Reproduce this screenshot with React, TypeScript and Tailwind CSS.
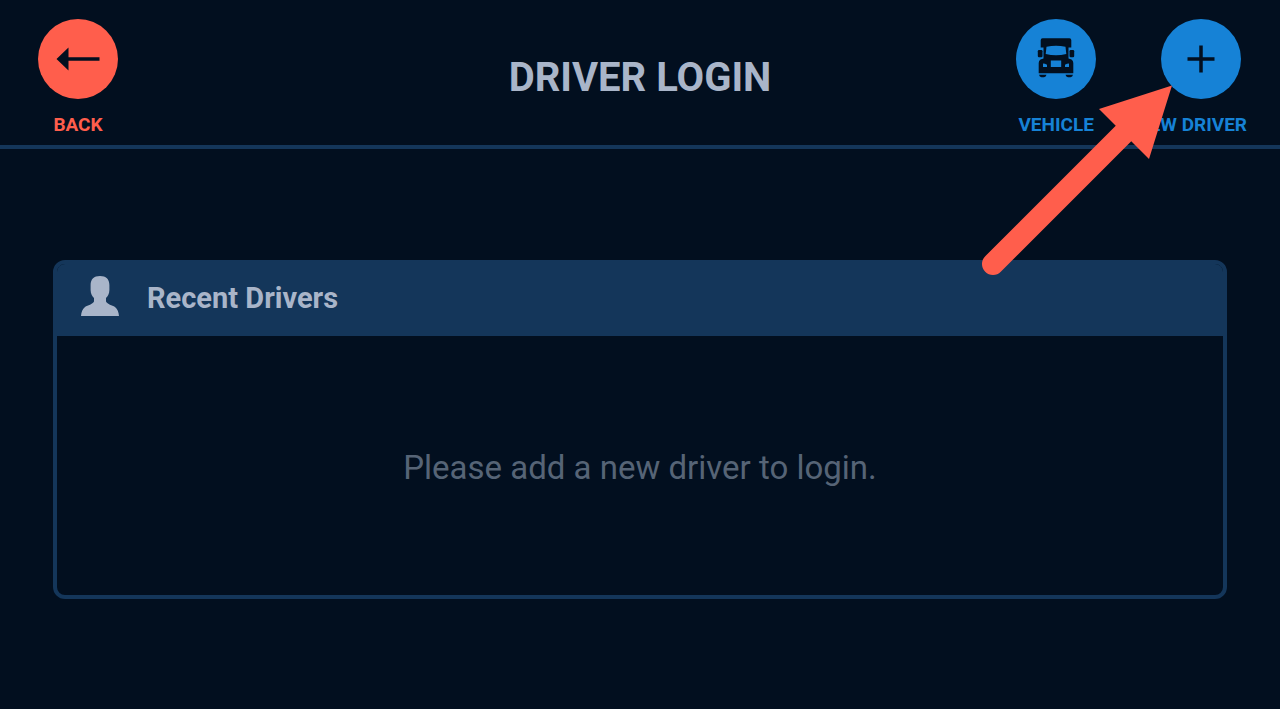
import type { ReactNode } from 'react'

interface RoundButtonProps {
  label: string
  tone: 'red' | 'blue'
  align?: 'center' | 'end'
  children: ReactNode
}

function RoundButton({ label, tone, align = 'center', children }: RoundButtonProps) {
  return (
    <button
      type="button"
      className={`flex flex-col gap-4 text-[19px] leading-5 font-bold whitespace-nowrap ${
        tone === 'red' ? 'text-[#ff5e4c]' : 'text-[#1682d6]'
      } ${align === 'end' ? 'items-end' : 'items-center'}`}
    >
      <span
        className={`flex size-20 items-center justify-center rounded-full text-[#020f1f] ${
          tone === 'red' ? 'bg-[#ff5e4c]' : 'bg-[#1682d6]'
        } ${align === 'end' ? 'mr-1.5' : ''}`}
      >
        {children}
      </span>
      <span>{label}</span>
    </button>
  )
}

function ArrowLeftIcon() {
  return (
    <svg viewBox="0 0 44 24" className="h-6 w-11" fill="currentColor" aria-hidden="true">
      <path d="M0.5 12 12.5 0.5V10.3H43.5V13.700H12.500V23.500Z" />
    </svg>
  )
}

function TruckIcon() {
  return (
    <svg viewBox="0 0 40 42" className="h-[42px] w-10" fill="currentColor" fillRule="evenodd" aria-hidden="true">
      <path d="M6.500 0.300H33.500Q35.300 0.300 35.300 2.200V9.500H32.500V20.500L35.500 21.500Q37.300 22.500 37.300 25V35.300H2.700V25Q2.700 22.500 4.500 21.500L7.500 20.500V9.500H4.700V2.200Q4.700 0.300 6.500 0.300ZM10.500 8.800Q20 6.800 29.500 8.800L30.300 16Q20 18.400 9.700 16ZM14.800 22.600V29H25.200V22.600ZM7 25.600Q9 25.600 11 26.800V29H7ZM33 25.600Q31 25.600 29 26.800V29H33Z" />
      <rect x="1.800" y="12" width="4.700" height="7.300" rx="1.200" />
      <rect x="33.500" y="12" width="4.700" height="7.300" rx="1.200" />
      <path d="M3 36.800H10.500Q10 39.200 8 39.200H5.500Q3.500 39.200 3 36.800ZM29.500 36.800H37Q36.500 39.200 34.500 39.200H32Q30 39.200 29.500 36.800Z" />
    </svg>
  )
}

function PlusIcon() {
  return (
    <svg viewBox="0 0 28 28" className="size-7" fill="none" stroke="currentColor" strokeWidth="3.5" aria-hidden="true">
      <path d="M14 0.500V27.500M0.500 14H27.500" />
    </svg>
  )
}

function PersonIcon() {
  return (
    <svg viewBox="0 0 38 40" className="h-10 w-[38px] shrink-0" fill="currentColor" aria-hidden="true">
      <path d="M19 0C25 0 28.400 3.200 28.400 9V14C28.400 18 26.500 20.500 25 22V25.500C26.500 28.500 31 29 34 31C36.500 33 37.700 36 38 40H0C0.300 36 1.500 33 4 31C7 29 11.500 28.500 13 25.500V22C11.500 20.500 9.600 18 9.600 14V9C9.600 3.200 13 0 19 0Z" />
    </svg>
  )
}

// Callout pointing at the new driver button
function PointerArrow() {
  return (
    <svg
      viewBox="0 0 193 193"
      className="pointer-events-none absolute top-[84px] right-[107px] size-[193px]"
      aria-hidden="true"
    >
      <path d="M13 180 150 43" stroke="#ff5e4c" strokeWidth="22" strokeLinecap="round" />
      <path d="M192 1.500 119 25 169 75Z" fill="#ff5e4c" />
    </svg>
  )
}

export default function App() {
  return (
    <div className="relative min-h-screen bg-[#020f1f] font-['Roboto',sans-serif]">
      <header className="grid grid-cols-[1fr_auto_1fr] items-start border-b-4 border-[#14365a] px-[33px] pt-[19px] pb-2.5">
        <div className="flex pl-[5px]">
          <RoundButton label="BACK" tone="red">
            <ArrowLeftIcon />
          </RoundButton>
        </div>
        <h1 className="pt-9 text-[40px] leading-[46px] font-bold text-[#a9b5c9]">DRIVER LOGIN</h1>
        <div className="flex justify-end gap-10">
          <RoundButton label="VEHICLE" tone="blue">
            <TruckIcon />
          </RoundButton>
          <RoundButton label="NEW DRIVER" tone="blue" align="end">
            <PlusIcon />
          </RoundButton>
        </div>
      </header>

      <main className="px-[53px] pt-[111px] pb-10">
        <section className="overflow-hidden rounded-xl border-4 border-[#14365a]">
          <div className="flex items-start gap-7 bg-[#14365a] px-6 pt-3 pb-5 text-[#a9b5c9]">
            <PersonIcon />
            <h2 className="pt-1 text-[29px] leading-9 font-bold">Recent Drivers</h2>
          </div>
          <p className="px-6 pt-[114px] pb-[109px] text-center text-[33px] leading-9 text-[#566476]">
            Please add a new driver to login.
          </p>
        </section>
      </main>

      <PointerArrow />
    </div>
  )
}
